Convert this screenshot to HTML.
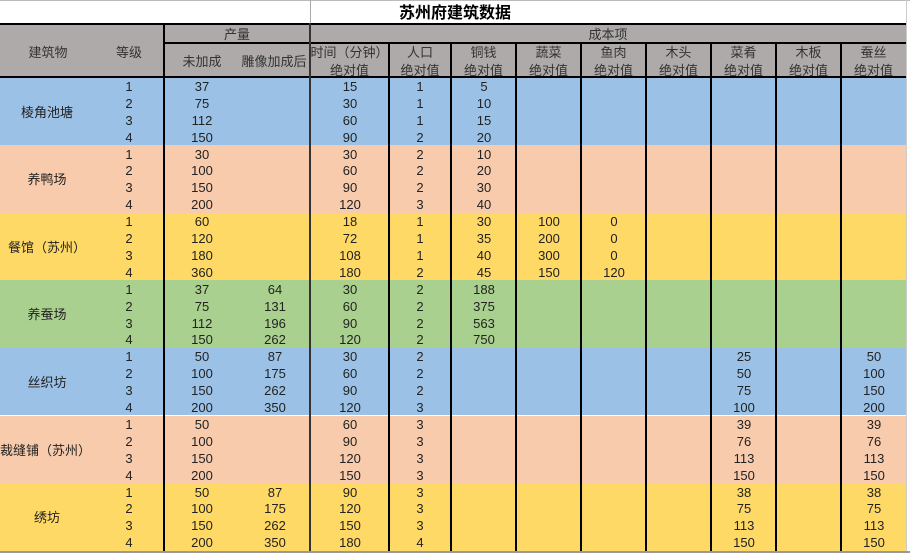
<!DOCTYPE html>
<html><head><meta charset="utf-8"><style>
*{margin:0;padding:0;box-sizing:border-box}
body{width:910px;height:553px;overflow:hidden;background:#fff;position:relative;font-family:"Liberation Sans","Noto Sans CJK SC",sans-serif;font-size:13px;color:#222}
.abs{position:absolute}
.g{position:absolute;left:0;width:906px;height:67.6px}
.r{position:absolute;left:0;width:906px;height:16.9px;line-height:16.9px;margin-top:1.5px}
.r i{font-style:normal;position:absolute;width:60px;text-align:center;top:0}
.a{left:99px}.b{left:172px}.c{left:245px}.d{left:320px}.e{left:390px}.f{left:454px}.h{left:519px}.k{left:584px}.m{left:714px}.n{left:844px}
.name{position:absolute;left:0;width:94px;text-align:center;top:1px;line-height:67.6px}
.v{position:absolute;width:2px;background:#000}
.hd{position:absolute;text-align:center;line-height:18px;color:#333}
</style></head><body>
<div class="abs" style="left:0;top:0;width:910px;height:1px;background:#bbb"></div>
<div class="abs" style="left:310px;top:0;width:1px;height:23px;background:#aaa"></div>
<div class="abs" style="left:906px;top:0;width:1px;height:553px;background:#ccc"></div>
<div class="abs" style="left:0;top:4px;width:910px;text-align:center;font-weight:bold;font-size:16px;line-height:20px;color:#000">苏州府建筑数据</div>
<div class="abs" style="left:0;top:23px;width:906px;height:54px;background:#aeaaaa"></div>
<div class="hd" style="left:0;top:44px;width:96px">建筑物</div>
<div class="hd" style="left:99px;top:44px;width:60px">等级</div>
<div class="hd" style="left:164px;top:26px;width:146px">产量</div>
<div class="hd" style="left:166px;top:53px;width:72px">未加成</div>
<div class="hd" style="left:238px;top:53px;width:72px">雕像加成后</div>
<div class="hd" style="left:310px;top:26px;width:596px">成本项</div>
<div class="hd" style="left:310px;top:44px;width:79px">时间（分钟）<br>绝对值</div>
<div class="hd" style="left:389px;top:44px;width:62px">人口<br>绝对值</div>
<div class="hd" style="left:451px;top:44px;width:65px">铜钱<br>绝对值</div>
<div class="hd" style="left:516px;top:44px;width:65px">蔬菜<br>绝对值</div>
<div class="hd" style="left:581px;top:44px;width:65px">鱼肉<br>绝对值</div>
<div class="hd" style="left:646px;top:44px;width:65px">木头<br>绝对值</div>
<div class="hd" style="left:711px;top:44px;width:65px">菜肴<br>绝对值</div>
<div class="hd" style="left:776px;top:44px;width:65px">木板<br>绝对值</div>
<div class="hd" style="left:841px;top:44px;width:65px">蚕丝<br>绝对值</div>

<div class="g" style="top:77.5px;background:#9bc2e6"><div class="name">棱角池塘</div>
<div class="r" style="top:0"><i class="a">1</i><i class="b">37</i><i class="d">15</i><i class="e">1</i><i class="f">5</i></div>
<div class="r" style="top:16.9px"><i class="a">2</i><i class="b">75</i><i class="d">30</i><i class="e">1</i><i class="f">10</i></div>
<div class="r" style="top:33.8px"><i class="a">3</i><i class="b">112</i><i class="d">60</i><i class="e">1</i><i class="f">15</i></div>
<div class="r" style="top:50.7px"><i class="a">4</i><i class="b">150</i><i class="d">90</i><i class="e">2</i><i class="f">20</i></div></div>

<div class="g" style="top:145.1px;background:#f8cbad"><div class="name">养鸭场</div>
<div class="r" style="top:0"><i class="a">1</i><i class="b">30</i><i class="d">30</i><i class="e">2</i><i class="f">10</i></div>
<div class="r" style="top:16.9px"><i class="a">2</i><i class="b">100</i><i class="d">60</i><i class="e">2</i><i class="f">20</i></div>
<div class="r" style="top:33.8px"><i class="a">3</i><i class="b">150</i><i class="d">90</i><i class="e">2</i><i class="f">30</i></div>
<div class="r" style="top:50.7px"><i class="a">4</i><i class="b">200</i><i class="d">120</i><i class="e">3</i><i class="f">40</i></div></div>

<div class="g" style="top:212.7px;background:#ffd966"><div class="name">餐馆（苏州）</div>
<div class="r" style="top:0"><i class="a">1</i><i class="b">60</i><i class="d">18</i><i class="e">1</i><i class="f">30</i><i class="h">100</i><i class="k">0</i></div>
<div class="r" style="top:16.9px"><i class="a">2</i><i class="b">120</i><i class="d">72</i><i class="e">1</i><i class="f">35</i><i class="h">200</i><i class="k">0</i></div>
<div class="r" style="top:33.8px"><i class="a">3</i><i class="b">180</i><i class="d">108</i><i class="e">1</i><i class="f">40</i><i class="h">300</i><i class="k">0</i></div>
<div class="r" style="top:50.7px"><i class="a">4</i><i class="b">360</i><i class="d">180</i><i class="e">2</i><i class="f">45</i><i class="h">150</i><i class="k">120</i></div></div>

<div class="g" style="top:280.3px;background:#a9d08e"><div class="name">养蚕场</div>
<div class="r" style="top:0"><i class="a">1</i><i class="b">37</i><i class="c">64</i><i class="d">30</i><i class="e">2</i><i class="f">188</i></div>
<div class="r" style="top:16.9px"><i class="a">2</i><i class="b">75</i><i class="c">131</i><i class="d">60</i><i class="e">2</i><i class="f">375</i></div>
<div class="r" style="top:33.8px"><i class="a">3</i><i class="b">112</i><i class="c">196</i><i class="d">90</i><i class="e">2</i><i class="f">563</i></div>
<div class="r" style="top:50.7px"><i class="a">4</i><i class="b">150</i><i class="c">262</i><i class="d">120</i><i class="e">2</i><i class="f">750</i></div></div>

<div class="g" style="top:347.9px;background:#9bc2e6"><div class="name">丝织坊</div>
<div class="r" style="top:0"><i class="a">1</i><i class="b">50</i><i class="c">87</i><i class="d">30</i><i class="e">2</i><i class="m">25</i><i class="n">50</i></div>
<div class="r" style="top:16.9px"><i class="a">2</i><i class="b">100</i><i class="c">175</i><i class="d">60</i><i class="e">2</i><i class="m">50</i><i class="n">100</i></div>
<div class="r" style="top:33.8px"><i class="a">3</i><i class="b">150</i><i class="c">262</i><i class="d">90</i><i class="e">2</i><i class="m">75</i><i class="n">150</i></div>
<div class="r" style="top:50.7px"><i class="a">4</i><i class="b">200</i><i class="c">350</i><i class="d">120</i><i class="e">3</i><i class="m">100</i><i class="n">200</i></div></div>

<div class="g" style="top:415.5px;background:#f8cbad"><div class="name" style="width:86px">裁缝铺（苏州）</div>
<div class="r" style="top:0"><i class="a">1</i><i class="b">50</i><i class="d">60</i><i class="e">3</i><i class="m">39</i><i class="n">39</i></div>
<div class="r" style="top:16.9px"><i class="a">2</i><i class="b">100</i><i class="d">90</i><i class="e">3</i><i class="m">76</i><i class="n">76</i></div>
<div class="r" style="top:33.8px"><i class="a">3</i><i class="b">150</i><i class="d">120</i><i class="e">3</i><i class="m">113</i><i class="n">113</i></div>
<div class="r" style="top:50.7px"><i class="a">4</i><i class="b">200</i><i class="d">150</i><i class="e">3</i><i class="m">150</i><i class="n">150</i></div></div>

<div class="g" style="top:483.1px;background:#ffd966"><div class="name">绣坊</div>
<div class="r" style="top:0"><i class="a">1</i><i class="b">50</i><i class="c">87</i><i class="d">90</i><i class="e">3</i><i class="m">38</i><i class="n">38</i></div>
<div class="r" style="top:16.9px"><i class="a">2</i><i class="b">100</i><i class="c">175</i><i class="d">120</i><i class="e">3</i><i class="m">75</i><i class="n">75</i></div>
<div class="r" style="top:33.8px"><i class="a">3</i><i class="b">150</i><i class="c">262</i><i class="d">150</i><i class="e">3</i><i class="m">113</i><i class="n">113</i></div>
<div class="r" style="top:50.7px"><i class="a">4</i><i class="b">200</i><i class="c">350</i><i class="d">180</i><i class="e">4</i><i class="m">150</i><i class="n">150</i></div></div>

<div class="abs" style="left:0;top:22.5px;width:906px;height:2px;background:#000"></div>
<div class="abs" style="left:164px;top:41.5px;width:742px;height:2px;background:#000"></div>
<div class="abs" style="left:0;top:76px;width:906px;height:2px;background:#000"></div>
<div class="v" style="left:163px;top:23px;height:530px"></div>
<div class="v" style="left:309px;top:23px;height:530px;width:1.5px;background:#333"></div>
<div class="v" style="left:388px;top:42px;height:511px"></div>
<div class="v" style="left:450px;top:42px;height:511px"></div>
<div class="v" style="left:515px;top:42px;height:511px"></div>
<div class="v" style="left:580px;top:42px;height:511px"></div>
<div class="v" style="left:645px;top:42px;height:511px"></div>
<div class="v" style="left:710px;top:42px;height:511px"></div>
<div class="v" style="left:775px;top:42px;height:511px"></div>
<div class="v" style="left:840px;top:42px;height:511px"></div>
<div class="abs" style="left:0;top:551px;width:910px;height:2px;background:#999"></div>
</body></html>
